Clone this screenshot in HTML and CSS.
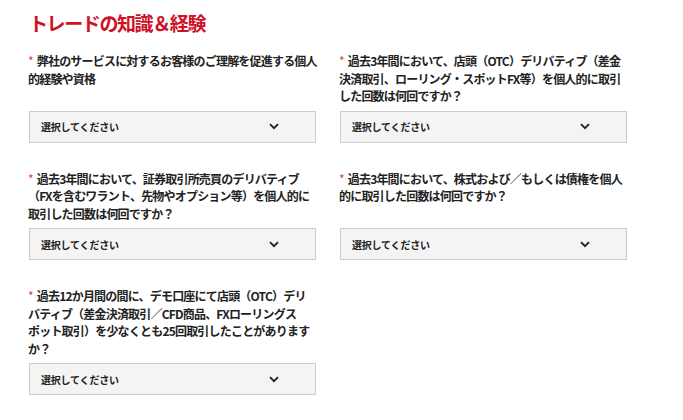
FILE: index.html
```html
<!DOCTYPE html>
<html lang="ja">
<head>
<meta charset="utf-8">
<link rel="stylesheet" href="styles.css">
</head>
<body>
<div class="page">
  <h2 class="title">トレードの知識＆経験</h2>
  <div class="grid">
    <div class="field">
      <div class="label"><span class="req">*</span> 弊社のサービスに対するお客様のご理解を促進する個人<br>的経験や資格</div>
      <div class="select"><span>選択してください</span><svg class="chev" width="10" height="7" viewBox="0 0 10 7"><path d="M1 1.2 L5 5.2 L9 1.2" fill="none" stroke="#222" stroke-width="1.9"/></svg></div>
    </div>
    <div class="field">
      <div class="label"><span class="req">*</span> 過去3年間において、店頭（OTC）デリバティブ（差金<br>決済取引、ローリング・スポットFX等）を個人的に取引<br>した回数は何回ですか？</div>
      <div class="select"><span>選択してください</span><svg class="chev" width="10" height="7" viewBox="0 0 10 7"><path d="M1 1.2 L5 5.2 L9 1.2" fill="none" stroke="#222" stroke-width="1.9"/></svg></div>
    </div>
    <div class="field">
      <div class="label"><span class="req">*</span> 過去3年間において、証券取引所売買のデリバティブ<br>（FXを含むワラント、先物やオプション等）を個人的に<br>取引した回数は何回ですか？</div>
      <div class="select"><span>選択してください</span><svg class="chev" width="10" height="7" viewBox="0 0 10 7"><path d="M1 1.2 L5 5.2 L9 1.2" fill="none" stroke="#222" stroke-width="1.9"/></svg></div>
    </div>
    <div class="field">
      <div class="label"><span class="req">*</span> 過去3年間において、株式および／もしくは債権を個人<br>的に取引した回数は何回ですか？</div>
      <div class="select"><span>選択してください</span><svg class="chev" width="10" height="7" viewBox="0 0 10 7"><path d="M1 1.2 L5 5.2 L9 1.2" fill="none" stroke="#222" stroke-width="1.9"/></svg></div>
    </div>
    <div class="field">
      <div class="label"><span class="req">*</span> 過去12か月間の間に、デモ口座にて店頭（OTC）デリ<br>バティブ（差金決済取引／CFD商品、FXローリングス<br>ポット取引）を少なくとも25回取引したことがありま<wbr>す<br>か？</div>
      <div class="select"><span>選択してください</span><svg class="chev" width="10" height="7" viewBox="0 0 10 7"><path d="M1 1.2 L5 5.2 L9 1.2" fill="none" stroke="#222" stroke-width="1.9"/></svg></div>
    </div>
  </div>
</div>
</body>
</html>
```
FILE: styles.css
```css
html, body {
  margin: 0;
  padding: 0;
  background: #ffffff;
}
body {
  font-family: "Noto Sans CJK JP", "Liberation Sans", sans-serif;
  color: #222222;
}
.page {
  padding: 11px 0 0 29px;
}
.title {
  margin: 0;
  font-size: 19px;
  line-height: 24px;
  font-weight: 700;
  color: #cf1126;
  letter-spacing: -1.4px;
}
.grid {
  margin-top: 17px;
  display: grid;
  grid-template-columns: 287px 287px;
  column-gap: 24px;
  row-gap: 27px;
}
.field {
  display: flex;
  flex-direction: column;
}
.label {
  flex: 1;
  font-size: 12px;
  line-height: 17.5px;
  font-weight: 700;
  margin: 0 -8px 6px -1px;
  letter-spacing: -0.8px;
  text-spacing-trim: space-all;
}
.req {
  color: #d9404f;
  font-weight: 400;
  margin-right: 2px;
}
.select {
  height: 30px;
  box-sizing: content-box;
  border: 1px solid #cccccc;
  background: #f4f4f4;
  display: flex;
  align-items: center;
  justify-content: space-between;
  padding: 0 36px 0 11px;
  font-size: 10px;
  font-weight: 700;
  color: #222222;
  letter-spacing: -0.2px;
}
.chev {
  display: block;
}
```
